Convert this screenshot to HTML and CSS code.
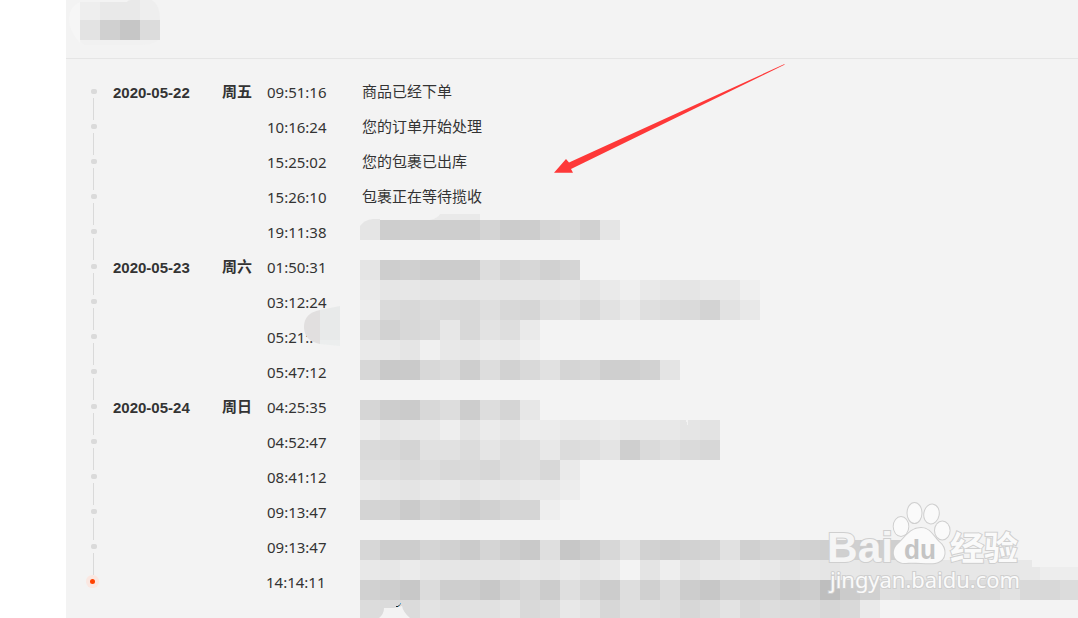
FILE: index.html
```html
<!DOCTYPE html>
<html lang="zh-CN">
<head>
<meta charset="utf-8">
<title>物流跟踪</title>
<link rel="stylesheet" href="styles.css">
</head>
<body>
<main class="panel">
  <header class="panel-header"></header>
  <ol class="timeline">
    <li class="event"><i class="marker"></i><b class="date">2020-05-22</b><b class="weekday">周五</b><time>09:51:16</time><span class="message">商品已经下单</span></li>
    <li class="event"><i class="marker"></i><b class="date"></b><b class="weekday"></b><time>10:16:24</time><span class="message">您的订单开始处理</span></li>
    <li class="event"><i class="marker"></i><b class="date"></b><b class="weekday"></b><time>15:25:02</time><span class="message">您的包裹已出库</span></li>
    <li class="event"><i class="marker"></i><b class="date"></b><b class="weekday"></b><time>15:26:10</time><span class="message">包裹正在等待揽收</span></li>
    <li class="event"><i class="marker"></i><b class="date"></b><b class="weekday"></b><time>19:11:38</time></li>
    <li class="event"><i class="marker"></i><b class="date">2020-05-23</b><b class="weekday">周六</b><time>01:50:31</time></li>
    <li class="event"><i class="marker"></i><b class="date"></b><b class="weekday"></b><time>03:12:24</time></li>
    <li class="event"><i class="marker"></i><b class="date"></b><b class="weekday"></b><time>05:21:.</time></li>
    <li class="event"><i class="marker"></i><b class="date"></b><b class="weekday"></b><time>05:47:12</time></li>
    <li class="event"><i class="marker"></i><b class="date">2020-05-24</b><b class="weekday">周日</b><time>04:25:35</time></li>
    <li class="event"><i class="marker"></i><b class="date"></b><b class="weekday"></b><time>04:52:47</time></li>
    <li class="event"><i class="marker"></i><b class="date"></b><b class="weekday"></b><time>08:41:12</time></li>
    <li class="event"><i class="marker"></i><b class="date"></b><b class="weekday"></b><time>09:13:47</time></li>
    <li class="event"><i class="marker"></i><b class="date"></b><b class="weekday"></b><time>09:13:47</time></li>
    <li class="event latest"><i class="marker"></i><b class="date"></b><b class="weekday"></b><time>14:14:11</time></li>
  </ol>
</main>
<svg class="overlay" width="1078" height="618" viewBox="0 0 1078 618">
  <path fill="#f6f6f6" d="M80 2q-11 5-11 17t11 24z"/>
  <path fill="#f1f1f1" d="M80 40h78q-4 5-18 5H84z"/>
  <path fill="#eee" d="M80 2h47q1-2 9-2h16q8 5 8 20H80z"/>
  <path fill="#e9e9e9" d="M100 2h27q1-2 5-2h8v20h-40z"/>
  <g id="mosaic" shape-rendering="crispEdges"></g>
  <path fill="#e9e9e9" d="M430 220q8-2 10-6h40v6z"/>
  <path fill="#e5e5e5" d="M360 240v-14q4-6 13-7h7v21z"/>
  <path fill="#f2f2f2" d="M686 420h2v5h-1v-3h-1z"/>
  <path fill="#e1dfdf" d="M320 310q-16 3-16 17 0 14 16 17z"/>
  <path fill="#e8eaea" d="M320 310l20-4v34h-20z"/>
  <path fill="#eceeee" d="M320 340h20v6l-20-2z"/>
  <path fill="#e8e8e8" d="M1020 560h12v7h8v13h-20z"/>
  <path fill="#ededed" d="M1040 567h38v13h-38z"/>
  <path fill="#f3f3f3" d="M379 618q5-4 5-10h10l8-2q1 6 8 12z"/>
  <path fill="none" stroke="#222" d="M396 606.500h2l2-2"/>
  <path fill="#4fa8df" d="M400 603h1v1h-1zM398 606h1v1h-1z"/>
  <path fill="#fe3838" d="M554 172.700L566 159l3 3.600L784 64.300 785 64.500 571 169l2 3.700z"/>
  <g class="watermark">
    <text class="wm-brand" x="827" y="562" textLength="66" lengthAdjust="spacingAndGlyphs">Bai</text>
    <ellipse cx="901" cy="526.500" rx="7.300" ry="9.500"/>
    <ellipse cx="914.500" cy="513" rx="7" ry="10"/>
    <ellipse cx="931.500" cy="514" rx="7.200" ry="9.500" transform="rotate(10 931.500 514)"/>
    <ellipse cx="942.300" cy="530.500" rx="7.300" ry="9"/>
    <path d="M921 528c9 0 12 8 18 14 8 6 8 19-4 21-7 1-21-1-29 0-12 1-16-12-8-19 8-7 12-16 23-16z"/>
    <text class="wm-du" x="904" y="559" textLength="32" lengthAdjust="spacingAndGlyphs">du</text>
    <text class="wm-cjk" x="950" y="560" textLength="68" lengthAdjust="spacingAndGlyphs">经验</text>
    <text class="wm-url" x="830" y="588" textLength="190" lengthAdjust="spacingAndGlyphs">jingyan.baidu.com</text>
  </g>
</svg>
<script src="mosaic.js"></script>
</body>
</html>
```
FILE: styles.css
```css
* { box-sizing: border-box; }
body {
  margin: 0;
  height: 618px;
  overflow: hidden;
  background: #fff;
  color: #333;
  font: 15px/34px "Noto Sans", "Noto Sans CJK SC", sans-serif;
}
.panel { margin-left: 66px; height: 618px; background: #f3f3f3; }
.panel-header { height: 59px; border-bottom: 1px solid #e5e5e5; }
.timeline { list-style: none; margin: 0; padding: 16px 0 0 25px; }
.event { display: flex; height: 35px; }
.marker {
  display: flex;
  flex-direction: column;
  gap: 4px;
  width: 22px;
  padding-top: 14px;
}
.marker::before {
  content: "";
  flex: none;
  width: 6px;
  height: 5px;
  border-radius: 2px;
  background: #dadada;
}
.marker::after {
  content: "";
  flex: none;
  width: 1px;
  height: 22px;
  margin-left: 2px;
  background: #d9d9d9;
}
.latest .marker::before {
  width: 5px;
  margin-left: -1px;
  border-radius: 50%;
  background: #ff4200;
  box-shadow: 0 0 0 4px #fae7e1;
}
.latest .marker::after { display: none; }
.date { width: 109px; font-family: "Liberation Sans", Arial, sans-serif; line-height: 35px; }
.weekday { width: 45px; font-family: "Noto Sans CJK SC", sans-serif; line-height: 32px; }
time { width: 95px; }
.latest time { margin-left: -1px; }
.message { font-family: "Noto Sans CJK SC", sans-serif; line-height: 32px; }
.overlay { position: absolute; top: 0; left: 0; }
.watermark {
  fill: #fafafa;
  stroke: #cfcfcf;
  stroke-width: 2px;
  paint-order: stroke;
}
.wm-brand { font: bold 42px "Liberation Sans", Arial, sans-serif; fill: #f5f5f5; }
.wm-du { font: bold 27px "Liberation Sans", Arial, sans-serif; fill: #c4c4c4; stroke: none; }
.wm-cjk { font: bold 33px "Noto Sans CJK SC", sans-serif; }
.wm-url { font: 21px "Noto Sans", sans-serif; }
```
FILE: mosaic.js
```js
// Each row: left edge, top edge, grey level of every 20px cell.
const rows = [
  [80, 20, "e3 d0 c6 dc"],
  [380, 220, "ce cf ce ce cd d4 cc cd d6 d9 d1 e5"],
  [360, 260, "e5 ce d0 cd cc cc dd d4 d7 d1 d5"],
  [360, 280, "ea e6 e7 e5 e6 e6 e6 e6 e6 e6 e8 e4 ea ef e9 e6 e5 e8 e8 ef"],
  [360, 300, "ed da d8 dc da d9 df d8 d6 e0 e1 d9 e2 e9 df dc da d3 e2 e8"],
  [360, 320, "dd d2 d8 da e7 d8 e3 de ea"],
  [360, 340, "ea e9 e5 f0 e8 e7 eb ea ef"],
  [360, 360, "d7 c9 ca d8 dc ce dd d2 d9 e1 d5 d7 cf cf d2 e4"],
  [360, 400, "d6 cd cb d8 dd cd dd d5 e7"],
  [360, 420, "ed e6 e8 e8 ee e4 eb e7 ed ec e9 e9 eb e8 e8 e8 e5 e3"],
  [360, 440, "da d9 d4 e1 e1 dc e5 de df e8 dc de e4 cf da df da d7"],
  [360, 460, "dd de db dd d9 da d7 de df d8 ea"],
  [360, 480, "e9 e6 e4 e8 ea e5 e9 e7 ea e9 ed"],
  [360, 500, "d4 d3 cb d4 d1 cd d1 d6 d5 ee"],
  [360, 540, "d7 cd cd d5 d1 cb d5 ce c9 df c7 cd d7 e2 d2 cf d2 d3 e1 d0 d5 d4 d1 cf d0 c9 cf d9"],
  [360, 560, "e8 e7 eb e7 e6 e5 e5 e5 e8 e6 ea e6 e9 f3 e4 ee e4 e9 e9 eb e8 e3 e7 e5 e8 e5 e6 e8 e7 e6 e7 e7 e7"],
  [360, 580, "d1 ce c8 dc ce ce c8 d2 d7 cc df d5 cc de d0 dc cd c7 d1 d1 d2 ca cd be cb d0 df dc dd dd da dc e2 d9 d8 dc e0"],
  [360, 600, "dc db db e3 e0 e1 e1 e5 d9 dc e8 e3 d7 df e0 dd d7 dc e3 d9 dd db da d6 d9 ea"]
];
const layer = document.getElementById("mosaic");
for (const [left, top, levels] of rows) {
  levels.split(" ").forEach((level, column) => {
    const cell = document.createElementNS("http://www.w3.org/2000/svg", "rect");
    cell.setAttribute("x", left + column * 20);
    cell.setAttribute("y", top);
    cell.setAttribute("width", 20);
    cell.setAttribute("height", 20);
    cell.setAttribute("fill", "#" + level.repeat(3));
    layer.append(cell);
  });
}
```
